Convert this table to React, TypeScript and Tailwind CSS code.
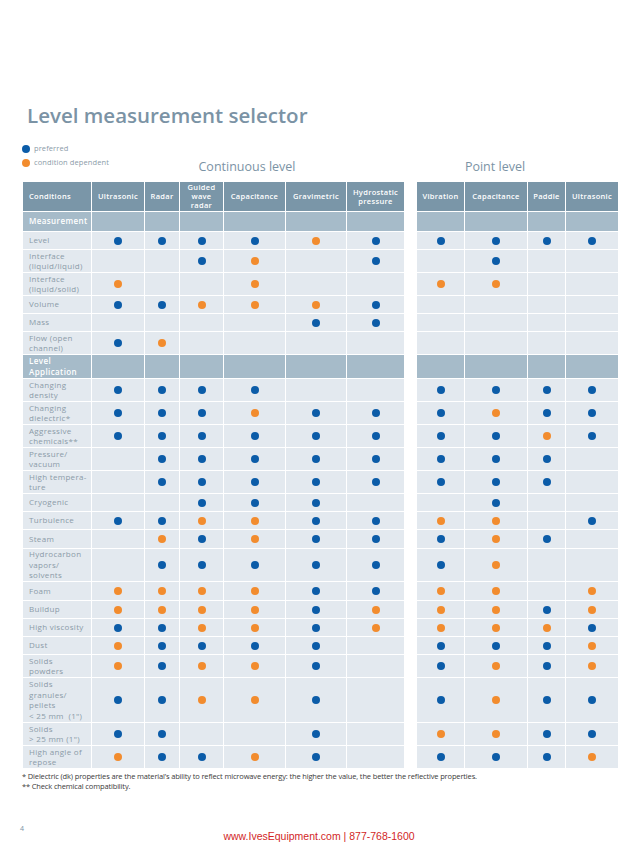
import React from "react";

type Row = { label: React.ReactNode; h: number; d?: string; sub?: boolean };

const rows: Row[] = [
  { label: "Measurement", h: 20, sub: true },
  { label: "Level", h: 18, d: "bbbbobbbbb" },
  { label: <>Interface<br />(liquid/liquid)</>, h: 23, d: "..bo.b.b.." },
  { label: <>Interface<br />(liquid/solid)</>, h: 23, d: "o..o..oo.." },
  { label: "Volume", h: 18, d: "bbooob...." },
  { label: "Mass", h: 18, d: "....bb...." },
  { label: <>Flow (open<br />channel)</>, h: 23, d: "bo........" },
  { label: <>Level<br />Application</>, h: 24, sub: true },
  { label: <>Changing<br />density</>, h: 23, d: "bbbb..bbbb" },
  { label: <>Changing<br />dielectric*</>, h: 23, d: "bbbobbbobb" },
  { label: <>Aggressive<br />chemicals**</>, h: 23, d: "bbbbbbbbob" },
  { label: <>Pressure/<br />vacuum</>, h: 23, d: ".bbbbbbbb." },
  { label: <>High tempera-<br />ture</>, h: 23, d: ".bbbbbbbb." },
  { label: "Cryogenic", h: 18, d: "..bbb..b.." },
  { label: "Turbulence", h: 18, d: "bboobboo.b" },
  { label: "Steam", h: 19, d: ".obobbbob." },
  { label: <>Hydrocarbon<br />vapors/<br />solvents</>, h: 33, d: ".bbbbbbo.." },
  { label: "Foam", h: 19, d: "oooobboo.o" },
  { label: "Buildup", h: 18, d: "oooobooobo" },
  { label: "High viscosity", h: 18, d: "bbooboooob" },
  { label: "Dust", h: 18, d: "obbbb.bbbo" },
  { label: <>Solids<br />powders</>, h: 23, d: "oboob.bobo" },
  { label: <>Solids<br />granules/<br />pellets<br />&lt; 25 mm&nbsp;&nbsp;(1")</>, h: 45, d: "bboob.bobb" },
  { label: <>Solids<br />&gt; 25 mm (1")</>, h: 23, d: "bb..b.oobb" },
  { label: <>High angle of<br />repose</>, h: 23, d: "obbob.bbbo" },
];

const widths = [69, 53, 35, 44, 62, 61, 58, 12, 48, 63, 38, 53];

const leftHeads: React.ReactNode[] = [
  "Ultrasonic",
  "Radar",
  <>Guided<br />wave<br />radar</>,
  "Capacitance",
  "Gravimetric",
  <>Hydrostatic<br />pressure</>,
];
const rightHeads: React.ReactNode[] = ["Vibration", "Capacitance", "Paddle", "Ultrasonic"];

function Dot({ c }: { c: string }) {
  if (c === "b") return <div className="mx-auto w-[8px] h-[8px] rounded-full bg-[#0b5ca8]" />;
  if (c === "o") return <div className="mx-auto w-[8px] h-[8px] rounded-full bg-[#f28c2e]" />;
  return null;
}

export default function App() {
  return (
    <div className="w-[638px] h-[851px] bg-white font-['Open_Sans',sans-serif] pt-[103px]">
      <div className="pl-[27px] h-[24px] leading-[24px] text-[20.5px] font-semibold text-[#7b93a5]">
        Level measurement selector
      </div>

      <div className="mt-[15px] flex items-start pl-[22px]">
        <div className="w-[125px] flex flex-col">
          <div className="h-[14px] flex items-center gap-[4px]">
            <div className="w-[8px] h-[8px] rounded-full bg-[#0b5ca8]" />
            <span className="text-[7.5px] text-[#8b9ba8] tracking-[0.1px]">preferred</span>
          </div>
          <div className="h-[14px] flex items-center gap-[4px]">
            <div className="w-[8px] h-[8px] rounded-full bg-[#f28c2e]" />
            <span className="text-[7.5px] text-[#8b9ba8] tracking-[0.1px]">condition dependent</span>
          </div>
        </div>
        <div className="w-[200px] pt-[17px] text-center text-[12.5px] leading-[16px] font-medium text-[#7b93a5]">
          Continuous level
        </div>
        <div className="ml-[98px] w-[100px] pt-[17px] text-center text-[12.5px] leading-[16px] font-medium text-[#7b93a5]">
          Point level
        </div>
      </div>

      <table className="mt-[6px] ml-[22px] table-fixed border-collapse w-[596px]">
        <colgroup>
          {widths.map((w, i) => (
            <col key={i} style={{ width: w }} />
          ))}
        </colgroup>
        <thead>
          <tr className="h-[30px]">
            <th className="p-0 border border-white bg-[#7a96a8] text-left pl-[6px] text-white font-semibold text-[7.5px] leading-[9px] tracking-[0.3px]">
              Conditions
            </th>
            {leftHeads.map((h, i) => (
              <th key={i} className="p-0 border border-white bg-[#7a96a8] text-center text-white font-semibold text-[7.5px] leading-[9px] tracking-[0.3px]">
                {h}
              </th>
            ))}
            <th className="p-0 border border-white bg-white" />
            {rightHeads.map((h, i) => (
              <th key={i} className="p-0 border border-white bg-[#7a96a8] text-center text-white font-semibold text-[7.5px] leading-[9px] tracking-[0.3px]">
                {h}
              </th>
            ))}
          </tr>
        </thead>
        <tbody>
          {rows.map((r, ri) => {
            if (r.sub) {
              return (
                <tr key={ri} style={{ height: r.h }}>
                  <td className="p-0 pl-[6px] border border-white bg-[#a6bbc9] text-white font-semibold text-[8px] leading-[10.5px] tracking-[0.4px] align-middle">
                    {r.label}
                  </td>
                  {Array.from({ length: 6 }).map((_, i) => (
                    <td key={i} className="p-0 border border-white bg-[#a6bbc9]" />
                  ))}
                  <td className="p-0 border border-white bg-white" />
                  {Array.from({ length: 4 }).map((_, i) => (
                    <td key={i} className="p-0 border border-white bg-[#a6bbc9]" />
                  ))}
                </tr>
              );
            }
            const d = r.d || "";
            return (
              <tr key={ri} style={{ height: r.h }}>
                <td className="p-0 pl-[6px] border border-white bg-[#e3e9ef] text-[#8b9ba8] text-[8px] leading-[10.5px] tracking-[0.3px] align-middle">
                  {r.label}
                </td>
                {d.slice(0, 6).split("").map((c, i) => (
                  <td key={i} className="p-0 border border-white bg-[#e3e9ef] align-middle">
                    <Dot c={c} />
                  </td>
                ))}
                <td className="p-0 border border-white bg-white" />
                {d.slice(6).split("").map((c, i) => (
                  <td key={i} className="p-0 border border-white bg-[#e3e9ef] align-middle">
                    <Dot c={c} />
                  </td>
                ))}
              </tr>
            );
          })}
        </tbody>
      </table>

      <div className="mt-[2px] pl-[22px] text-[7.5px] leading-[10px] text-[#3a3a3a] tracking-[-0.15px]">
        <div>* Dielectric (dk) properties are the material’s ability to reflect microwave energy: the higher the value, the better the reflective properties.</div>
        <div>** Check chemical compatibility.</div>
      </div>

      <div className="mt-[33px] grid grid-cols-[1fr_auto_1fr]">
        <div className="pl-[20px] text-[7px] leading-[10px] text-[#7b93a5]">4</div>
        <div className="pt-[6px] font-['Liberation_Sans',Arial,sans-serif] text-[10.5px] leading-[12px] text-[#d21f1f]">
          www.IvesEquipment.com | 877-768-1600
        </div>
        <div />
      </div>
    </div>
  );
}
